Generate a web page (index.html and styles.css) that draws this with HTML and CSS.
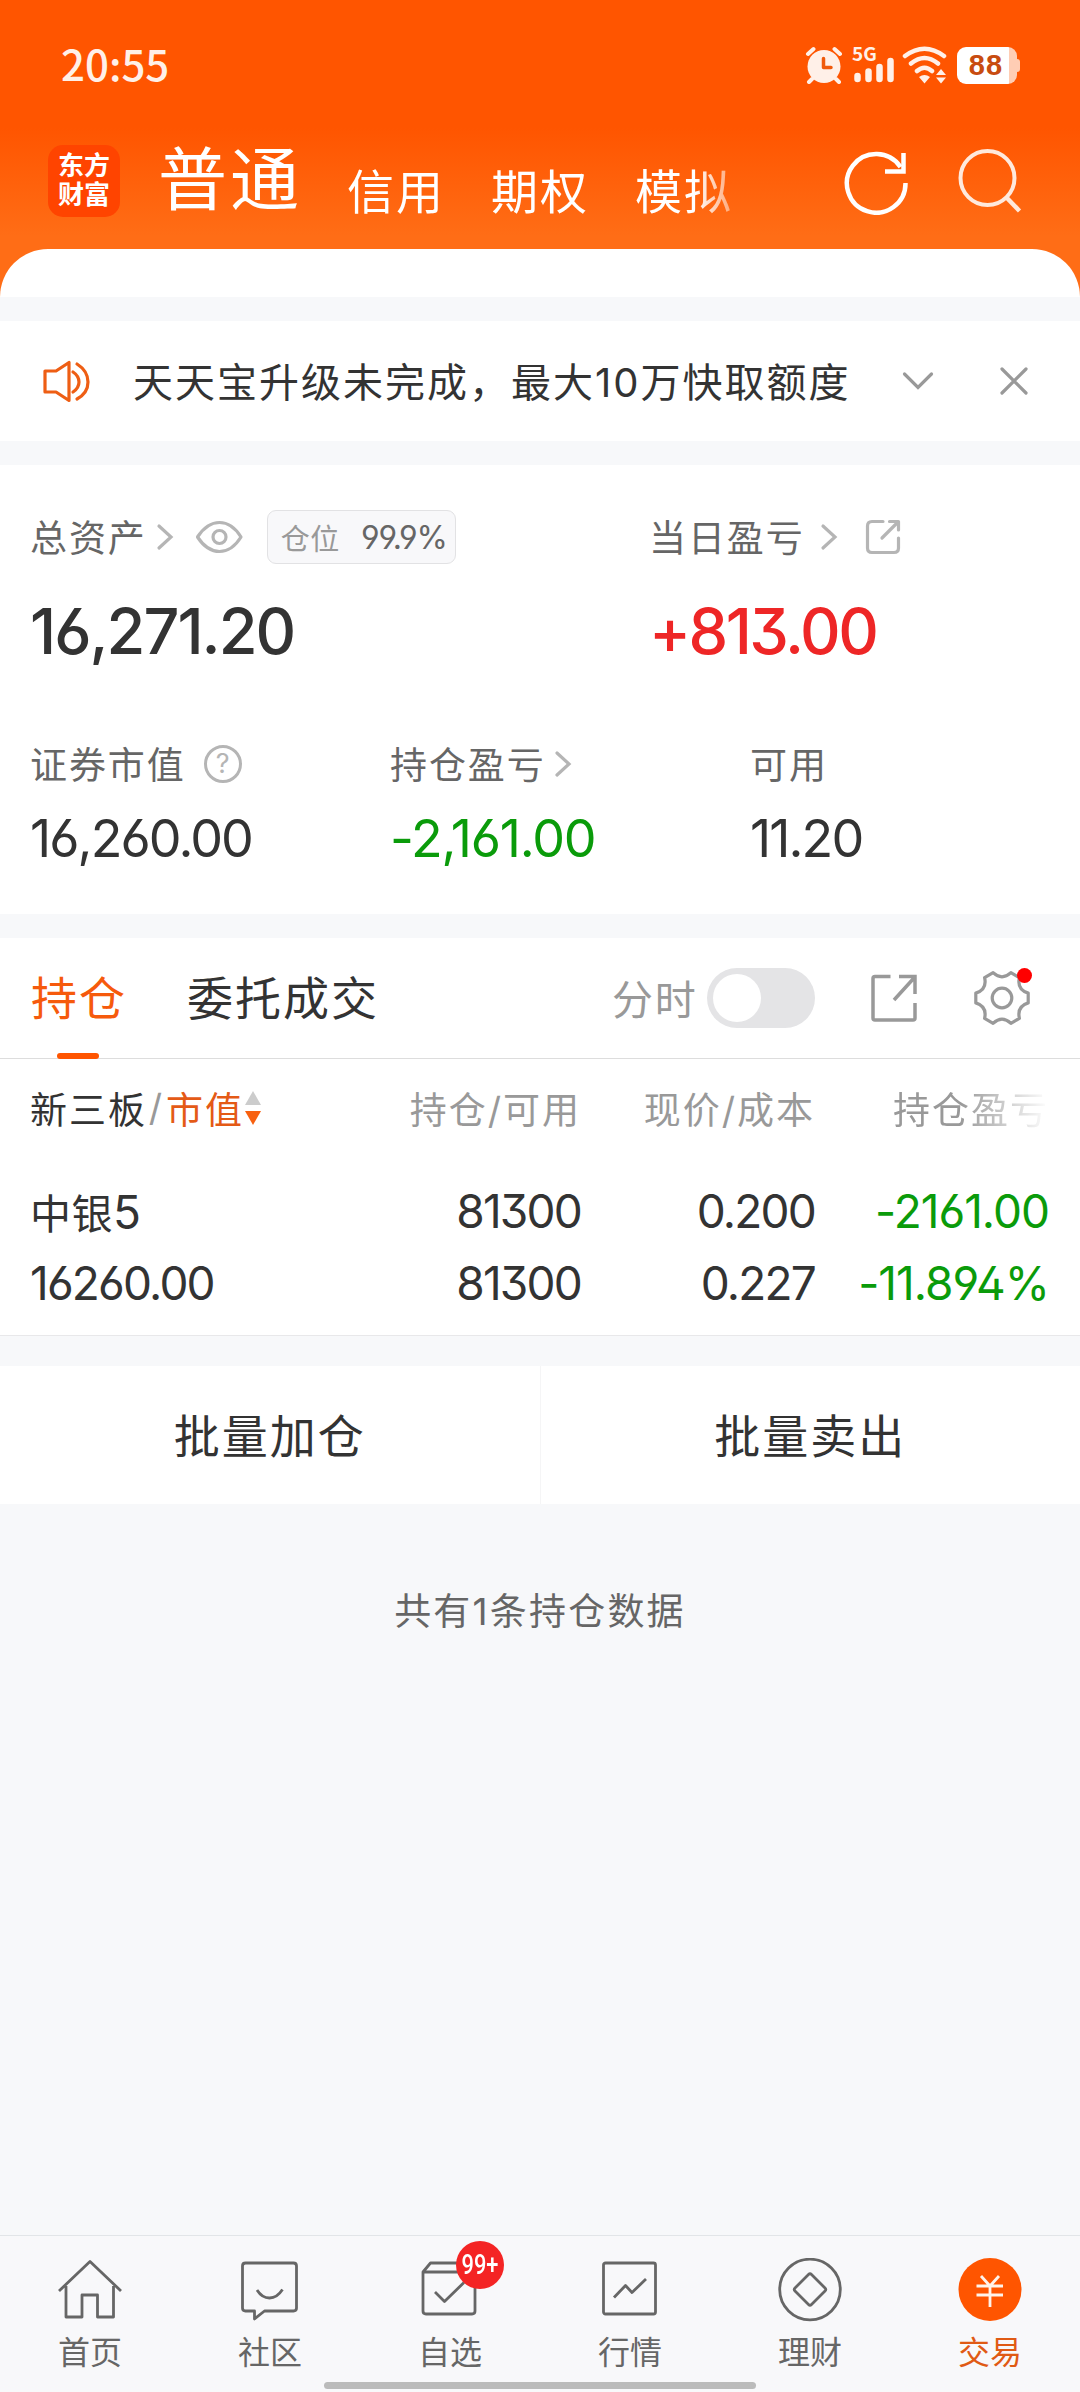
FILE: index.html
```html
<!DOCTYPE html>
<html lang="zh-CN">
<head>
    <meta charset="UTF-8">
    <meta name="viewport" content="width=device-width, initial-scale=1.0">
    <title>普通交易 - 持仓</title>
    <link rel="stylesheet" href="styles.css">
</head>
<body>
    <div class="app">
        <header class="header">
            <div class="status-bar">
                <span class="time">20:55</span>
                <div class="status-icons">
                    <svg class="alarm" width="38" height="38" viewBox="0 0 38 38">
                        <circle cx="19" cy="20.500" r="16.500" fill="#fff0e8"/>
                        <path d="M3 8L8.500 3M35 8L29.500 3M7 33L4 36M31 33L34 36" stroke="#fff0e8" stroke-width="4" stroke-linecap="round"/>
                        <path d="M18.500 12.500V21.500H26" fill="none" stroke="#f05a0c" stroke-width="3.500" stroke-linecap="round" stroke-linejoin="round"/>
                    </svg>
                    <div class="signal">
                        <span>5G</span>
                        <svg width="42" height="38" viewBox="0 0 42 38">
                            <path d="M5.500 30V33M16.500 25.500V33M27.500 21V33M38.500 15V33" stroke="#fff0e8" stroke-width="6.500" stroke-linecap="round"/>
                        </svg>
                    </div>
                    <svg class="wifi" width="46" height="38" viewBox="0 0 46 38">
                        <path d="M3 10Q22.500 -4.500 42 10M9 17.500Q22.500 6.500 36 17.500M15 25Q22.500 18.500 30 25" fill="none" stroke="#fff0e8" stroke-width="4.500" stroke-linecap="round"/>
                        <path d="M17 31Q22.500 27 28 31L22.500 37.500ZM34 29L39 23L44 29ZM34 31.500L39 37.500L44 31.500Z" fill="#fff0e8"/>
                    </svg>
                    <div class="battery"><span>88</span></div>
                </div>
            </div>
            <div class="nav-row">
                <div class="logo">东方<br>财富</div>
                <nav class="account-tabs">
                    <span class="account-tab active">普通</span>
                    <span class="account-tab">信用</span>
                    <span class="account-tab">期权</span>
                    <span class="account-tab">模拟</span>
                </nav>
                <svg class="refresh" width="66" height="66" viewBox="0 0 66 66">
                    <path d="M62.500 34A29.300 29.300 0 1 1 57.500 18" fill="none" stroke="#fff" stroke-width="4.500"/>
                    <path d="M60.500 4V22.500H42" fill="none" stroke="#fff" stroke-width="4.500"/>
                </svg>
                <svg class="search" width="66" height="66" viewBox="0 0 66 66">
                    <circle cx="31.500" cy="29" r="27" fill="none" stroke="#ffe9dc" stroke-width="4"/>
                    <path d="M50.500 48.500L63.500 62" stroke="#ffe9dc" stroke-width="4.500"/>
                </svg>
            </div>
            <div class="sheet-top"></div>
        </header>

        <section class="notice">
            <svg width="50" height="44" viewBox="0 0 50 44" fill="none" stroke="#ee5e14" stroke-width="3.200" stroke-linecap="round" stroke-linejoin="round">
                <path d="M4 12H15L28 3.500V41.500L15 33H4Z"/>
                <path d="M32 13Q38 17 38 23T32 33M36 5Q47 12 47 23T36 40"/>
            </svg>
            <p>天天宝升级未完成，最大10万快取额度</p>
            <svg class="notice-more" width="34" height="30" viewBox="0 0 34 30" fill="none" stroke="#999" stroke-width="3.200" stroke-linecap="round">
                <path d="M3.500 8L17 21.500L30.500 8"/>
            </svg>
            <svg class="notice-close" width="30" height="30" viewBox="0 0 30 30" fill="none" stroke="#999" stroke-width="3.200" stroke-linecap="round">
                <path d="M3 3L27 27M27 3L3 27"/>
            </svg>
        </section>

        <section class="assets">
            <div class="assets-main">
                <div class="total">
                    <div class="label">
                        <span>总资产</span>
                        <svg class="chevron" width="18" height="28" viewBox="0 0 18 28"><path d="M3 3L15 14L3 25"/></svg>
                        <svg class="eye" width="48" height="34" viewBox="0 0 48 34" fill="none" stroke="#b5b5b5" stroke-width="3.200">
                            <path d="M2.500 17Q12 2.500 24.500 2.500T46 17Q37 31.500 24.500 31.500T2.500 17Z" stroke-linejoin="round"/>
                            <circle cx="24.500" cy="17" r="6.500"/>
                        </svg>
                        <div class="ratio"><span>仓位</span><b>99.9%</b></div>
                    </div>
                    <div class="amount">16,271.20</div>
                </div>
                <div class="today">
                    <div class="label">
                        <span>当日盈亏</span>
                        <svg class="chevron far" width="18" height="28" viewBox="0 0 18 28"><path d="M3 3L15 14L3 25"/></svg>
                        <svg class="share" width="36" height="36" viewBox="0 0 36 36" fill="none" stroke="#b5b5b5" stroke-width="3.200" stroke-linecap="round" stroke-linejoin="round">
                            <path d="M18 2.500H7Q2.500 2.500 2.500 7V29Q2.500 33.500 7 33.500H29Q33.500 33.500 33.500 29V19M17 19L33 3M24.500 2.500H33.500V11"/>
                        </svg>
                    </div>
                    <div class="amount up">+813.00</div>
                </div>
            </div>
            <div class="assets-sub">
                <div class="item">
                    <div class="label">
                        <span>证券市值</span>
                        <div class="help">?</div>
                    </div>
                    <div class="value">16,260.00</div>
                </div>
                <div class="item">
                    <div class="label">
                        <span>持仓盈亏</span>
                        <svg class="chevron near" width="18" height="28" viewBox="0 0 18 28"><path d="M3 3L15 14L3 25"/></svg>
                    </div>
                    <div class="value down">-2,161.00</div>
                </div>
                <div class="item">
                    <div class="label"><span>可用</span></div>
                    <div class="value">11.20</div>
                </div>
            </div>
        </section>

        <section class="positions">
            <div class="tabs">
                <span class="tab active">持仓</span>
                <span class="tab">委托成交</span>
                <span class="switch-label">分时</span>
                <span class="switch"></span>
                <svg class="export" width="50" height="50" viewBox="0 0 50 50" fill="none" stroke="#999" stroke-width="3.500">
                    <path d="M20.500 3.500H5Q3 3.500 3 5.500V45Q3 47 5 47H43Q45 47 45 45V30M24 27L44 5M29 3.500H45V21"/>
                </svg>
                <div class="settings">
                    <svg width="58" height="58" viewBox="-29 -29 58 58" fill="none" stroke="#999" stroke-width="3.200" stroke-linejoin="round">
                        <path d="M26.200 -4.900V4.900Q14.700 8.500 17.400 20.400L8.900 25.300Q0 17 -8.900 25.300L-17.400 20.400Q-14.700 8.500 -26.200 4.900V-4.900Q-14.700 -8.500 -17.400 -20.400L-8.900 -25.300Q0 -17 8.900 -25.300L17.400 -20.400Q14.700 -8.500 26.200 -4.900Z"/>
                        <circle r="9.800"/>
                    </svg>
                    <span class="dot"></span>
                </div>
            </div>
            <div class="row table-head">
                <span class="name">新三板<i>/</i><em>市值</em>
                    <svg width="18" height="36" viewBox="0 0 18 36"><path d="M1 15L9 1L17 15Z" fill="#ccc"/><path d="M1 21L9 35L17 21Z" fill="#f8600f"/></svg>
                </span>
                <span>持仓/可用</span>
                <span>现价/成本</span>
                <span class="fade">持仓盈亏</span>
            </div>
            <div class="row">
                <span class="name"><span class="stock">中银</span>5</span>
                <span>81300</span>
                <span>0.200</span>
                <span class="down">-2161.00</span>
            </div>
            <div class="row">
                <span class="name">16260.00</span>
                <span>81300</span>
                <span>0.227</span>
                <span class="down">-11.894%</span>
            </div>
        </section>

        <section class="batch">
            <div class="batch-btn">批量加仓</div>
            <div class="batch-btn">批量卖出</div>
        </section>

        <p class="summary">共有1条持仓数据</p>

        <footer class="tabbar">
            <div class="tabbar-item">
                <svg width="64" height="64" viewBox="0 0 64 64">
                    <path d="M1 33L32 3.500L63 33M8 28V59H24V37H39.500V59H55.500V28"/>
                </svg>
                <span>首页</span>
            </div>
            <div class="tabbar-item">
                <svg width="64" height="64" viewBox="0 0 64 64">
                    <path d="M7.500 5H55.500Q58.500 5 58.500 8V50Q58.500 53 55.500 53H26.500L16.500 61V53H7.500Q4.500 53 4.500 50V8Q4.500 5 7.500 5ZM19 32Q24 40 31.500 40T44.500 31.500"/>
                </svg>
                <span>社区</span>
            </div>
            <div class="tabbar-item">
                <svg width="64" height="64" viewBox="0 0 64 64">
                    <path d="M5 14L12.500 5H50L57 14V53Q57 56 54 56H8Q5 56 5 53ZM5 14H57M17 34L26.500 43.500L46 24.500"/>
                </svg>
                <span>自选</span>
                <div class="badge"><b>99+</b></div>
            </div>
            <div class="tabbar-item">
                <svg width="64" height="64" viewBox="0 0 64 64">
                    <rect x="5.500" y="5" width="52" height="51" rx="2"/>
                    <path d="M16 39.500L27.500 27.500L34 34.500L48 21"/>
                </svg>
                <span>行情</span>
            </div>
            <div class="tabbar-item">
                <svg width="64" height="64" viewBox="0 0 64 64">
                    <circle cx="32" cy="31.500" r="30.300"/>
                    <path d="M30.500 16.500Q32 15 33.500 16.500L47 30Q48.500 31.500 47 33L33.500 46.500Q32 48 30.500 46.500L17 33Q15.500 31.500 17 30Z"/>
                </svg>
                <span>理财</span>
            </div>
            <div class="tabbar-item active">
                <svg width="64" height="64" viewBox="0 0 64 64">
                    <circle cx="32" cy="31.500" r="31.500" fill="#ff5500" stroke="none"/>
                    <path d="M18.500 28H45M18.500 37H45M23 18L32 28L41 18M32 28V49" stroke="#fff3ea"/>
                </svg>
                <span>交易</span>
            </div>
            <div class="home-indicator"></div>
        </footer>
    </div>
</body>
</html>
```

FILE: styles.css
```css
* {
    box-sizing: border-box;
}
body {
    margin: 0;
    background-color: #f7f8fa;
    font-family: Inter, "Noto Sans CJK SC", sans-serif;
    font-feature-settings: "ss01", "calt" 0;
    color: #333;
}
svg {
    display: block;
    flex-shrink: 0;
}
p {
    margin: 0;
}
.app {
    display: flex;
    flex-direction: column;
    width: 1080px;
    height: 2392px;
    overflow: hidden;
}

/* header */
.header {
    height: 297px;
    background: linear-gradient(#ff5500 0, #ff5500 128px, #ff6d16 236px);
    color: white;
}
.status-bar {
    display: flex;
    justify-content: space-between;
    height: 129px;
    padding: 46px 63px 0 61px;
}
.time {
    height: 38px;
    font: 500 42px/33px "Noto Sans CJK SC", sans-serif;
    color: #fff0e8;
}
.status-icons {
    display: flex;
    height: 38px;
}
.signal {
    position: relative;
    width: 42px;
    height: 38px;
    margin-left: 9px;
}
.signal span {
    position: absolute;
    left: 0;
    top: -2px;
    font: bold 19px/18px "Noto Sans CJK SC", sans-serif;
    color: #fff0e8;
}
.wifi {
    margin-left: 8px;
}
.battery {
    position: relative;
    width: 60px;
    height: 37px;
    margin: 1px 0 0 9px;
    border-radius: 9px;
    background: linear-gradient(to right, #fff 52px, #ffcdb4 52px);
    text-align: center;
}
.battery::after {
    content: "";
    position: absolute;
    right: -3px;
    top: 12px;
    width: 4px;
    height: 13px;
    border-radius: 0 3px 3px 0;
    background: #ffcdb4;
}
.battery span {
    display: block;
    padding-right: 2px;
    font: bold 29px/37px "Liberation Sans", sans-serif;
    letter-spacing: 1px;
    color: #c84c10;
}
.nav-row {
    display: flex;
    height: 120px;
    padding-left: 48px;
}
.logo {
    width: 72px;
    height: 72px;
    margin-top: 16px;
    padding-top: 6px;
    border-radius: 15px;
    background-color: #ff4400;
    font-weight: 700;
    font-size: 26px;
    line-height: 29px;
    text-align: center;
}
.account-tabs {
    display: flex;
    align-items: flex-start;
    width: 620px;
    height: 120px;
    padding-left: 38px;
    overflow: hidden;
    white-space: nowrap;
    -webkit-mask-image: linear-gradient(to right, #000 575px, transparent 640px);
    mask-image: linear-gradient(to right, #000 575px, transparent 640px);
}
.account-tab {
    flex-shrink: 0;
    margin-right: 46px;
    font-size: 47px;
    line-height: 126px;
    letter-spacing: 2px;
}
.account-tab.active {
    margin-right: 45px;
    font-size: 69px;
    line-height: 103px;
    letter-spacing: 3px;
}
.refresh {
    margin: 20px 0 0 103px;
}
.search {
    margin: 20px 0 0 47px;
}
.sheet-top {
    height: 48px;
    border-radius: 48px 48px 0 0;
    background-color: white;
}

/* notice */
.notice {
    display: flex;
    align-items: center;
    height: 120px;
    margin: 24px 0;
    padding-left: 41px;
    background-color: white;
}
.notice p {
    width: 730px;
    margin-left: 42px;
    padding-bottom: 2px;
    font-size: 40px;
    letter-spacing: 2px;
    white-space: nowrap;
}
.notice-more {
    margin-left: 38px;
}
.notice-close {
    margin-left: 64px;
}

/* assets */
.assets {
    height: 449px;
    padding: 45px 30px 0;
    background-color: white;
}
.assets-main,
.assets-sub {
    display: flex;
}
.total {
    width: 619px;
}
.label {
    display: flex;
    align-items: center;
    height: 54px;
    font-size: 37px;
    letter-spacing: 1.9px;
    color: #666;
}
.label > span {
    padding-bottom: 2px;
}
.chevron {
    margin-left: 9px;
    fill: none;
    stroke: #b5b5b5;
    stroke-width: 3.200;
    stroke-linecap: round;
}
.chevron.far {
    margin-left: 15px;
}
.chevron.near {
    margin-left: 8px;
}
.eye {
    margin-left: 21px;
}
.share {
    margin-left: 27px;
}
.ratio {
    display: flex;
    align-items: center;
    justify-content: space-between;
    width: 189px;
    height: 54px;
    margin-left: 24px;
    padding: 0 8px 0 13px;
    border: 1px solid #e2e2e4;
    border-radius: 9px;
    background-color: #f8f8fa;
    font-size: 29px;
    letter-spacing: 0.5px;
    color: #999;
}
.ratio b {
    font-weight: 400;
    font-size: 32px;
    letter-spacing: -1.2px;
    color: #666;
}
.amount {
    margin-top: 27px;
    height: 80px;
    font-weight: 500;
    font-size: 63px;
    line-height: 80px;
    letter-spacing: -2px;
}
.up {
    letter-spacing: -2.5px;
    color: #ee2626;
}
.down {
    color: #0a9b0a;
}
.assets-sub {
    margin-top: 66px;
}
.item {
    flex-shrink: 0;
    width: 360px;
}
.item:last-child {
    width: 300px;
}
.help {
    width: 38px;
    height: 38px;
    margin-left: 18px;
    border: 3px solid #b5b5b5;
    border-radius: 50%;
    font-size: 27px;
    line-height: 32px;
    letter-spacing: 0;
    text-align: center;
    color: #b5b5b5;
}
.value {
    margin-top: 18px;
    font-size: 52px;
    line-height: 60px;
    letter-spacing: -1.9px;
}
.value.down {
    letter-spacing: -1.2px;
}

/* positions */
.positions {
    height: 398px;
    margin-top: 24px;
    border-bottom: 1px solid #e8e8ea;
    background-color: white;
}
.tabs {
    display: flex;
    align-items: center;
    height: 121px;
    padding-left: 31px;
    border-bottom: 1px solid #ddd;
}
.tab {
    position: relative;
    margin-right: 60px;
    font-size: 46px;
    letter-spacing: 2px;
    line-height: 121px;
}
.tab.active {
    color: #f65a0c;
}
.tab.active::after {
    content: "";
    position: absolute;
    left: 26px;
    bottom: 0;
    width: 42px;
    height: 6px;
    border-radius: 3px;
    background-color: #ff5500;
}
.switch-label {
    margin-left: 173px;
    padding-bottom: 2px;
    font-size: 41px;
    letter-spacing: 1.7px;
    color: #999;
}
.switch {
    width: 108px;
    height: 60px;
    margin-left: 10px;
    padding: 6px;
    border-radius: 30px;
    background-color: #e4e4e6;
}
.switch::before {
    content: "";
    display: block;
    width: 48px;
    height: 48px;
    border-radius: 50%;
    background-color: white;
}
.export {
    margin-left: 55px;
}
.settings {
    position: relative;
    margin-left: 53px;
}
.dot {
    position: absolute;
    right: -1px;
    top: -1px;
    width: 15px;
    height: 15px;
    border-radius: 50%;
    background-color: red;
}
.row {
    display: grid;
    grid-template-columns: 319px 232px 234px 234px;
    align-items: center;
    height: 72px;
    padding-left: 30px;
    font-size: 46px;
    letter-spacing: -1.8px;
    text-align: right;
}
.row .name {
    text-align: left;
}
.row .down {
    letter-spacing: -1px;
}
.stock {
    font-size: 41px;
    letter-spacing: 0.5px;
}
.table-head {
    height: 97px;
    margin-bottom: 19px;
    font-size: 37px;
    letter-spacing: 2px;
    color: #999;
}
.table-head .name {
    display: flex;
    align-items: center;
    color: #333;
}
.table-head i {
    width: 19px;
    font-style: normal;
    text-align: center;
    color: #999;
}
.table-head em {
    font-style: normal;
    color: #e45a16;
}
.fade {
    -webkit-mask-image: linear-gradient(to right, #000 62%, transparent);
    mask-image: linear-gradient(to right, #000 62%, transparent);
}

/* batch actions */
.batch {
    display: flex;
    height: 138px;
    margin-top: 30px;
    background-color: white;
}
.batch-btn {
    flex: 1;
    font-size: 46px;
    line-height: 140px;
    letter-spacing: 2px;
    text-align: center;
}
.batch-btn:first-child {
    border-right: 1px solid #f5f5f6;
}
.summary {
    margin-top: 81px;
    font-size: 37px;
    line-height: 54px;
    letter-spacing: 2.2px;
    text-align: center;
    color: #666;
}

/* bottom tab bar */
.tabbar {
    position: relative;
    display: flex;
    height: 157px;
    margin-top: auto;
    border-top: 1px solid #e2e5e8;
    background-color: #f8f8fa;
}
.tabbar-item {
    position: relative;
    display: flex;
    flex: 1;
    flex-direction: column;
    align-items: center;
    padding-top: 22px;
    font-size: 32px;
    line-height: 44px;
    color: #666;
}
.tabbar-item svg {
    fill: none;
    stroke: #666;
    stroke-width: 2.800;
    stroke-linejoin: round;
}
.tabbar-item span {
    margin-top: 9px;
}
.tabbar-item.active {
    color: #e05a14;
}
.badge {
    position: absolute;
    left: 96px;
    top: 5px;
    width: 48px;
    height: 48px;
    border-radius: 50%;
    background-color: #f42424;
    text-align: center;
}
.badge b {
    display: block;
    margin: 0 -10px;
    font: 500 28px/48px Roboto, sans-serif;
    color: white;
    transform: scaleX(0.78);
}
.home-indicator {
    position: absolute;
    left: 324px;
    bottom: 3px;
    width: 432px;
    height: 7px;
    border-radius: 4px;
    background-color: #bbb;
}
```
